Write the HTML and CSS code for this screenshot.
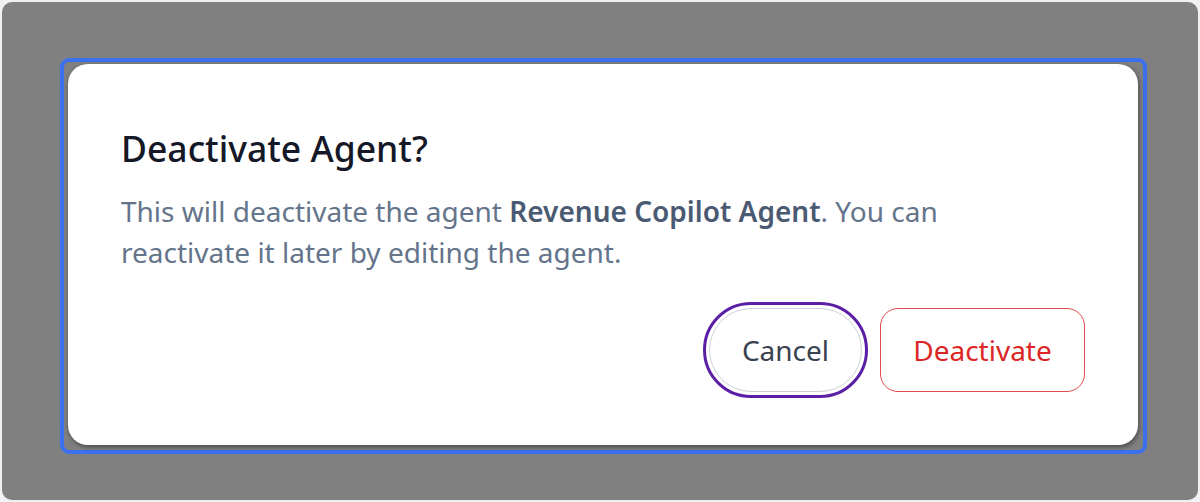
FILE: index.html
```html
<!DOCTYPE html>
<html lang="en">
<head>
<meta charset="utf-8">
<title>Deactivate Agent</title>
<link rel="stylesheet" href="styles.css">
</head>
<body>
<div class="backdrop">
  <div class="focus-frame">
    <div class="dialog" role="dialog" aria-labelledby="dlg-title">
      <h2 class="dialog-title" id="dlg-title">Deactivate Agent?</h2>
      <p class="dialog-text">This will deactivate the agent <strong>Revenue Copilot Agent</strong>. You can reactivate it later by editing the agent.</p>
      <div class="dialog-actions">
        <button class="btn btn-cancel">Cancel</button>
        <button class="btn btn-danger">Deactivate</button>
      </div>
    </div>
  </div>
</div>
</body>
</html>
```
FILE: styles.css
```css
html, body {
  margin: 0;
  padding: 0;
}
body {
  background: #f1f1f3;
  width: 1200px;
  height: 502px;
  overflow: hidden;
  font-family: "Noto Sans", "Open Sans", sans-serif;
}
.backdrop {
  margin: 2px;
  height: 498px;
  box-sizing: border-box;
  border-radius: 10px;
  background: #808080;
  padding: 56px 0 0 58px;
}
.focus-frame {
  width: 1087px;
  height: 396px;
  box-sizing: border-box;
  border: 4px solid #3b70ee;
  border-radius: 9px;
  padding: 2px 5px 5px 4px;
}
.dialog {
  height: 100%;
  box-sizing: border-box;
  background: #fff;
  border-radius: 20px;
  box-shadow: 1px 2px 5px rgba(0, 0, 0, 0.45);
  padding: 62px 53px 53px 53px;
  display: flex;
  flex-direction: column;
}
.dialog-title {
  margin: 0;
  font-size: 35.5px;
  line-height: 44px;
  font-weight: 500;
  color: #141827;
}
.dialog-text {
  margin: 21px 0 0 0;
  font-size: 28px;
  line-height: 41px;
  color: #64748b;
  max-width: 880px;
}
.dialog-text strong {
  font-weight: 600;
  color: #4b5a73;
}
.dialog-actions {
  margin-top: auto;
  display: flex;
  justify-content: flex-end;
  gap: 18px;
}
.btn {
  font-family: inherit;
  font-size: 28px;
  height: 84px;
  background: #fff;
  cursor: pointer;
  padding: 0;
}
.btn-cancel {
  width: 153px;
  border: 1.5px solid #cfd1d8;
  border-radius: 42px;
  color: #3a4150;
  outline: 3px solid #5b1fa6;
  outline-offset: 3px;
}
.btn-danger {
  width: 205px;
  border: 1.5px solid #e5484d;
  border-radius: 18px;
  color: #dc2626;
}
```
